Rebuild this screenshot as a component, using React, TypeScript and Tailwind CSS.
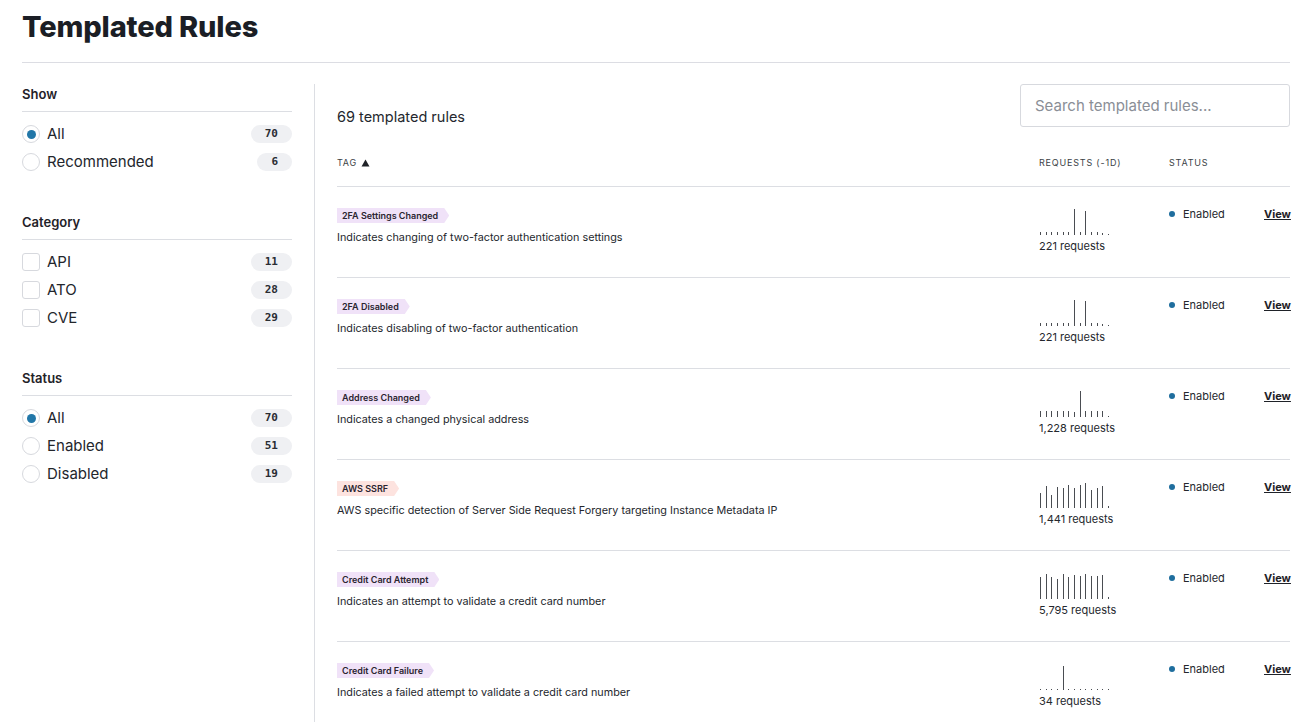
import React from "react";

type Rule = {
  tag: string;
  tone: "purple" | "red";
  desc: string;
  bars: number[];
  requests: string;
};

const rules: Rule[] = [
  {
    tag: "2FA Settings Changed",
    tone: "purple",
    desc: "Indicates changing of two-factor authentication settings",
    bars: [3, 3, 3, 3, 3, 3, 26, 3, 24, 3, 3, 2, 1],
    requests: "221 requests",
  },
  {
    tag: "2FA Disabled",
    tone: "purple",
    desc: "Indicates disabling of two-factor authentication",
    bars: [3, 3, 3, 3, 3, 3, 26, 3, 25, 3, 3, 2, 1],
    requests: "221 requests",
  },
  {
    tag: "Address Changed",
    tone: "purple",
    desc: "Indicates a changed physical address",
    bars: [6, 6, 6, 6, 6, 6, 5, 26, 6, 6, 6, 6, 1],
    requests: "1,228 requests",
  },
  {
    tag: "AWS SSRF",
    tone: "red",
    desc: "AWS specific detection of Server Side Request Forgery targeting Instance Metadata IP",
    bars: [15, 22, 13, 21, 20, 23, 20, 23, 25, 18, 20, 22, 2],
    requests: "1,441 requests",
  },
  {
    tag: "Credit Card Attempt",
    tone: "purple",
    desc: "Indicates an attempt to validate a credit card number",
    bars: [22, 25, 22, 20, 25, 22, 24, 23, 25, 23, 23, 24, 2],
    requests: "5,795 requests",
  },
  {
    tag: "Credit Card Failure",
    tone: "purple",
    desc: "Indicates a failed attempt to validate a credit card number",
    bars: [1, 1, 1, 1, 24, 1, 1, 1, 1, 1, 1, 1, 1],
    requests: "34 requests",
  },
];

const font = { fontFamily: "Inter, 'Noto Sans', sans-serif" };

function Count({ n }: { n: number }) {
  return (
    <span className="flex h-[18px] items-center rounded-full bg-[#eff0f3] px-[14px] font-['DejaVu_Sans_Mono',monospace] text-[11px] font-bold text-[#2a2d33]">
      {n}
    </span>
  );
}

function Radio({ checked }: { checked?: boolean }) {
  return (
    <span className="flex h-[18px] w-[18px] items-center justify-center rounded-full border border-[#d7d9de] bg-white">
      {checked && <span className="h-[9px] w-[9px] rounded-full bg-[#2277a8]" />}
    </span>
  );
}

function Box() {
  return <span className="h-[18px] w-[18px] rounded-[3px] border border-[#d7d9de] bg-white" />;
}

function Option({ label, n, kind, checked }: { label: string; n: number; kind: "radio" | "box"; checked?: boolean }) {
  return (
    <div className="flex h-[28px] items-center">
      {kind === "radio" ? <Radio checked={checked} /> : <Box />}
      <span className="ml-[7px] flex-1 text-[15px] text-[#23262c]">{label}</span>
      <Count n={n} />
    </div>
  );
}

function Group({ title, children, first }: { title: string; children: React.ReactNode; first?: boolean }) {
  return (
    <div className={first ? "" : "mt-[36px]"}>
      <div className="border-b border-[#dcdee3] pb-[7px] text-[13px] font-semibold leading-[20px] text-[#1f2228]">{title}</div>
      <div className="mt-[8px]">{children}</div>
    </div>
  );
}

function Spark({ bars }: { bars: number[] }) {
  return (
    <svg width="74" height="27" viewBox="0 0 74 27" shapeRendering="crispEdges" className="block">
      {bars.map((h, i) => {
        const x = Math.round(1 + i * 5.67);
        return <rect key={i} x={x} y={27 - h} width="1" height={h} fill="#4a4d52" />;
      })}
    </svg>
  );
}

function Tag({ text, tone }: { text: string; tone: "purple" | "red" }) {
  return (
    <span
      className={`flex h-[15px] items-center pl-[5px] pr-[11px] text-[9px] font-semibold text-[#2b2530] [clip-path:polygon(0_0,calc(100%-5px)_0,100%_50%,calc(100%-5px)_100%,0_100%)] ${
        tone === "red" ? "bg-[#fde3df]" : "bg-[#f0e2f8]"
      }`}
    >
      {text}
    </span>
  );
}

function Row({ rule }: { rule: Rule }) {
  return (
    <div className="flex h-[91px] border-b border-[#dcdee3]">
      <div className="flex flex-1 flex-col items-start pt-[21px]">
        <Tag text={rule.tag} tone={rule.tone} />
        <div className="mt-[7px] text-[10.8px] leading-[16px] text-[#24272d]">{rule.desc}</div>
      </div>
      <div className="w-[130px] shrink-0 pt-[21px]">
        <Spark bars={rule.bars} />
        <div className="mt-[4px] text-[11px] leading-[14px] text-[#24272d]">{rule.requests}</div>
      </div>
      <div className="flex w-[95px] shrink-0 items-start pt-[20px]">
        <span className="mt-[4px] h-[6px] w-[6px] rounded-full bg-[#1f6e9e]" />
        <span className="ml-[8px] text-[11px] leading-[14px] text-[#24272d]">Enabled</span>
      </div>
      <div className="max-w-[26px] flex-1 pt-[20px] text-right text-[11px] font-bold leading-[14px] text-[#1f2228] underline">
        View
      </div>
    </div>
  );
}

export default function App() {
  return (
    <div style={font} className="h-[722px] overflow-hidden bg-white pl-[22px] pr-[25px] text-[#1f2228]">
      <div className="border-b border-[#dcdde3] pb-[18px] pt-[10px]">
        <h1 className="text-[29px] font-extrabold leading-[34px] tracking-[-0.005em] text-[#1b1e25]">Templated Rules</h1>
      </div>
      <div className="mt-[21px] flex">
        <aside className="mr-[22px] w-[270px] shrink-0">
          <Group title="Show" first>
            <Option label="All" n={70} kind="radio" checked />
            <Option label="Recommended" n={6} kind="radio" />
          </Group>
          <Group title="Category">
            <Option label="API" n={11} kind="box" />
            <Option label="ATO" n={28} kind="box" />
            <Option label="CVE" n={29} kind="box" />
          </Group>
          <Group title="Status">
            <Option label="All" n={70} kind="radio" checked />
            <Option label="Enabled" n={51} kind="radio" />
            <Option label="Disabled" n={19} kind="radio" />
          </Group>
        </aside>
        <main className="min-h-[700px] flex-1 border-l border-[#dcdee3] pl-[22px]">
          <div className="flex items-end justify-between">
            <div className="text-[14.5px] leading-[20px] text-[#24272d]">69 templated rules</div>
            <input
              className="h-[43px] w-[270px] rounded-[3px] border border-[#d7d9de] px-[14px] text-[15px] text-[#24272d] outline-none placeholder:text-[#8a8e96]"
              placeholder="Search templated rules..."
            />
          </div>
          <div className="flex border-b border-[#dcdee3] pb-[16px] pt-[29px] text-[9px] uppercase leading-[14px] tracking-[0.09em] text-[#3b3f46]">
            <div className="flex flex-1 items-center gap-[4px]">
              TAG
              <svg width="9" height="8" viewBox="0 0 9 8">
                <path d="M4.5 0.5 L8.5 7.5 L0.5 7.5 Z" fill="#1f2228" />
              </svg>
            </div>
            <div className="w-[130px] shrink-0">Requests (-1D)</div>
            <div className="w-[95px] shrink-0">Status</div>
            <div className="w-[26px]" />
          </div>
          {rules.map((r) => (
            <Row key={r.tag} rule={r} />
          ))}
        </main>
      </div>
    </div>
  );
}
